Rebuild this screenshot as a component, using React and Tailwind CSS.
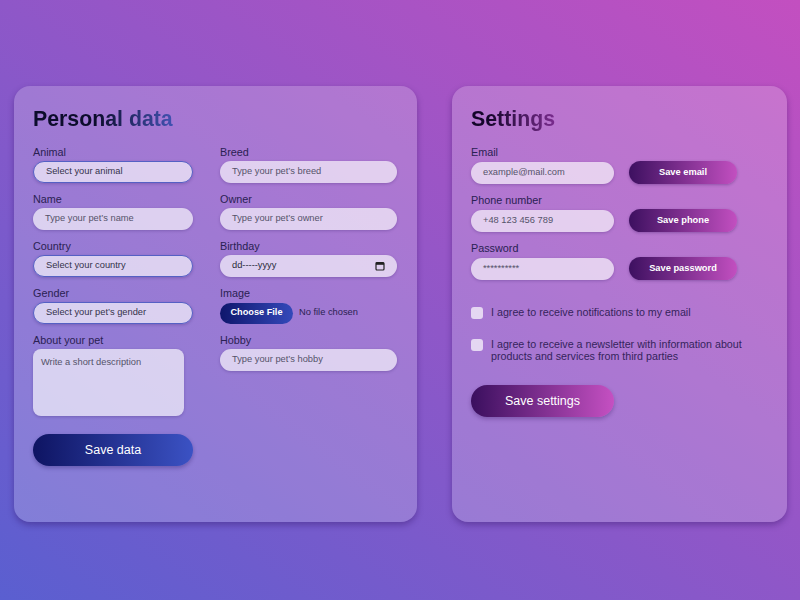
import React from "react";

const label = "block h-[15px] leading-[15px] text-[10.8px] text-[#2a2152] mb-[1px]";
const inputBase =
  "h-[22px] w-full rounded-full bg-white/65 pl-[12px] flex items-center text-[9.3px] shadow-[0_1px_3px_rgba(40,20,90,0.25)]";

function Field({ name, children }) {
  return (
    <div className="flex flex-col">
      <span className={label}>{name}</span>
      {children}
    </div>
  );
}

function TextInput({ ph }) {
  return <div className={inputBase + " text-[#55536a]"}>{ph}</div>;
}

function SelectInput({ ph }) {
  return (
    <div className={inputBase + " text-[#34324a] border border-[#5560c4]"}>{ph}</div>
  );
}

function Calendar() {
  return (
    <svg width="10" height="10" viewBox="0 0 10 10" className="mr-[12px]">
      <rect x="1" y="1.5" width="8" height="7.5" rx="1" fill="none" stroke="#222" strokeWidth="1.2" />
      <rect x="1" y="1.5" width="8" height="2.3" fill="#222" />
    </svg>
  );
}

export default function App() {
  return (
    <div className="h-[600px] w-full overflow-hidden bg-[linear-gradient(to_top_right,#5a5fd0,#c34fc0)] font-['Liberation_Sans',Arial,sans-serif]">
      <div className="flex gap-[35px] pl-[14px] pt-[86px]">
        {/* Personal data */}
        <div className="w-[403px] h-[436px] rounded-[16px] bg-white/20 shadow-[0_3px_6px_rgba(40,10,90,0.35)] px-[19px] pt-[20px]">
          <h1 className="h-[26px] leading-[26px] text-[21.3px] font-bold bg-[linear-gradient(to_right,#0c0c2c_45%,#4252b2)] bg-clip-text text-transparent w-max">
            Personal data
          </h1>
          <div className="mt-[13px] grid grid-cols-[160px_177px] gap-x-[27px] gap-y-[9px]">
            <Field name="Animal">
              <SelectInput ph="Select your animal" />
            </Field>
            <Field name="Breed">
              <TextInput ph="Type your pet’s breed" />
            </Field>
            <Field name="Name">
              <TextInput ph="Type your pet’s name" />
            </Field>
            <Field name="Owner">
              <TextInput ph="Type your pet’s owner" />
            </Field>
            <Field name="Country">
              <SelectInput ph="Select your country" />
            </Field>
            <Field name="Birthday">
              <div className={inputBase + " text-[#2a2a3a] justify-between"}>
                <span>dd-----yyyy</span>
                <Calendar />
              </div>
            </Field>
            <Field name="Gender">
              <SelectInput ph="Select your pet’s gender" />
            </Field>
            <Field name="Image">
              <div className="flex items-center h-[22px]">
                <div className="h-[21px] w-[73px] rounded-full bg-[linear-gradient(to_right,#0f166c,#3449ba)] flex items-center justify-center text-[9.2px] font-bold text-white">
                  Choose File
                </div>
                <span className="ml-[6px] text-[9.3px] text-[#2a2152]">No file chosen</span>
              </div>
            </Field>
            <Field name="About your pet">
              <div className="w-[151px] h-[67px] rounded-[8px] bg-white/65 shadow-[0_1px_3px_rgba(40,20,90,0.25)] pl-[8px] pt-[7px] text-[9.3px] text-[#55536a]">
                Write a short description
              </div>
            </Field>
            <Field name="Hobby">
              <TextInput ph="Type your pet’s hobby" />
            </Field>
          </div>
          <button className="mt-[18px] h-[32px] w-[160px] rounded-full bg-[linear-gradient(to_right,#0e1462,#3b52c4)] text-white text-[12.5px] shadow-[0_2px_4px_rgba(20,10,80,0.3)]">
            Save data
          </button>
        </div>

        {/* Settings */}
        <div className="w-[335px] h-[436px] rounded-[16px] bg-white/20 shadow-[0_3px_6px_rgba(40,10,90,0.35)] px-[19px] pt-[20px]">
          <h1 className="h-[26px] leading-[26px] text-[21.3px] font-bold bg-[linear-gradient(to_right,#14052a_20%,#7a2c8e)] bg-clip-text text-transparent w-max">
            Settings
          </h1>
          <div className="mt-[13px] flex flex-col gap-[9px]">
            {[
              ["Email", "example@mail.com", "Save email"],
              ["Phone number", "+48 123 456 789", "Save phone"],
              ["Password", "**********", "Save password"],
            ].map(([n, ph, b]) => (
              <div key={n} className="flex flex-col">
                <span className={label}>{n}</span>
                <div className="flex items-center gap-[15px]">
                  <div className="w-[143px]">
                    <div className={inputBase + " text-[#55536a] pl-[11px]"}>{ph}</div>
                  </div>
                  <button className="h-[23px] w-[108px] rounded-full bg-[linear-gradient(to_right,#3d1060,#c24fc0)] text-white text-[9.3px] font-bold shadow-[0_1px_3px_rgba(40,10,80,0.3)]">
                    {b}
                  </button>
                </div>
              </div>
            ))}
          </div>
          <div className="mt-[26px] flex items-start gap-[8px]">
            <span className="mt-[1px] w-[12px] h-[12px] rounded-[3px] bg-white/70 shrink-0" />
            <span className="text-[10.7px] leading-[12px] text-[#35245c]">
              I agree to receive notifications to my email
            </span>
          </div>
          <div className="mt-[19px] flex items-start gap-[8px]">
            <span className="mt-[1px] w-[12px] h-[12px] rounded-[3px] bg-white/70 shrink-0" />
            <span className="text-[10.7px] leading-[12px] text-[#35245c] w-[260px]">
              I agree to receive a newsletter with information about products and services from third parties
            </span>
          </div>
          <button className="mt-[23px] h-[32px] w-[143px] rounded-full bg-[linear-gradient(to_right,#3a0f5e,#c550c2)] text-white text-[12.5px] shadow-[0_2px_4px_rgba(40,10,80,0.3)]">
            Save settings
          </button>
        </div>
      </div>
    </div>
  );
}
